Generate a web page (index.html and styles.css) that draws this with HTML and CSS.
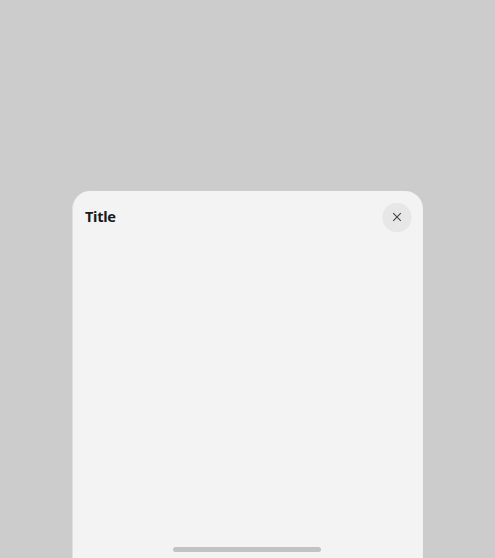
FILE: index.html
```html
<!DOCTYPE html>
<html lang="en">
<head>
<meta charset="utf-8">
<title>Sheet</title>
<link rel="stylesheet" href="styles.css">
</head>
<body>
<section class="sheet">
  <header class="header">
    <h1 class="title">Title</h1>
    <button class="close" aria-label="Close">
      <svg class="icon" viewBox="0 0 10 10"><path d="M1.2 1.2l7.6 7.6M8.8 1.2l-7.6 7.6"/></svg>
    </button>
  </header>
  <div class="content"></div>
  <div class="handle"></div>
</section>
</body>
</html>
```

FILE: styles.css
```css
* { box-sizing: border-box; }
body {
  margin: 0;
  height: 558px;
  padding: 191px 72px 0;
  background: #ccc;
  font-family: "Noto Sans", sans-serif;
  overflow: hidden;
}
.sheet {
  display: flex;
  flex-direction: column;
  width: 351px;
  height: 367px;
  padding: 11px 11px 6px 12px;
  border-left: 1px solid #e0e0e0;
  border-radius: 18px 18px 0 0;
  background: #f3f3f3;
}
.header {
  display: flex;
  align-items: center;
  justify-content: space-between;
  height: 30px;
}
.title {
  margin: 0 0 2px;
  font-size: 14.6px;
  line-height: 20px;
  font-weight: 700;
  letter-spacing: -0.3px;
  color: #1a1a1a;
}
.close {
  display: flex;
  align-items: center;
  justify-content: center;
  width: 30px;
  height: 30px;
  padding: 0;
  border: 0;
  background: radial-gradient(circle at 50% 51.5%, #e7e7e7 14.3px, transparent 15px);
}
.icon {
  width: 10px;
  height: 10px;
  fill: none;
  stroke: #444;
  stroke-width: 1.1;
}
.content { flex: 1; }
.handle {
  align-self: center;
  width: 148px;
  height: 5px;
  margin-right: 3px;
  border-radius: 3px;
  background: #c2c2c2;
}
```
